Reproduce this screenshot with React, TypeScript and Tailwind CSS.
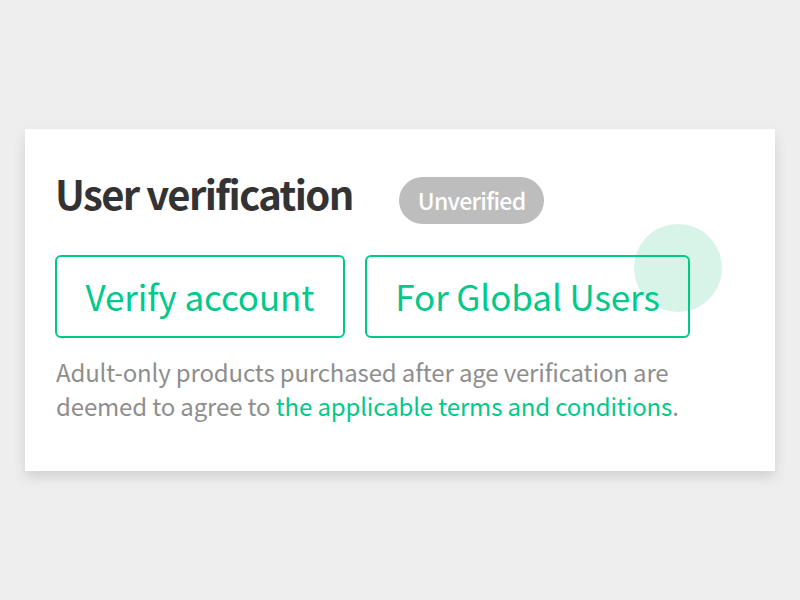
export default function App() {
  return (
    <div
      className="w-[800px] h-[600px] bg-[#eeeeee] pt-[129px] px-[25px]"
      style={{ fontFamily: '"Noto Sans CJK KR", "Source Sans Pro", "Noto Sans", sans-serif' }}
    >
      {/* Card */}
      <div className="relative bg-white h-[342px] shadow-[0_6px_12px_rgba(0,0,0,0.12)] px-[30px] pt-[40px]">
        <div className="flex items-start">
          <h2 className="text-[40px] leading-[48px] font-bold text-[#333333] tracking-[-1.6px]">
            User verification
          </h2>
          <span className="ml-[46px] mt-[8px] h-[47px] px-[19px] flex items-center rounded-full bg-[#bdbdbd] text-white text-[23px] leading-none font-medium tracking-[-0.7px]">
            Unverified
          </span>
        </div>

        <div className="relative flex gap-[20px] mt-[31px]">
          {/* decorative ripple */}
          <div className="absolute left-[579px] top-[-31px] w-[88px] h-[88px] rounded-full bg-[#d8f4e8]" />
          <button className="relative w-[290px] h-[83px] border-2 border-[#00c98a] rounded-[6px] text-[#00c98a] text-[35px] leading-none tracking-[-0.1px] flex items-center justify-center pb-[2px]">
            Verify account
          </button>
          <button className="relative w-[325px] h-[83px] border-2 border-[#00c98a] rounded-[6px] text-[#00c98a] text-[35px] leading-none tracking-[-0.1px] flex items-center justify-center pb-[2px]">
            For Global Users
          </button>
        </div>

        <p className="mt-[17px] ml-[1px] text-[24px] leading-[34px] text-[#8e8e8e] tracking-[-0.15px] w-[660px]">
          Adult-only products purchased after age verification are deemed to agree to{" "}
          <a href="#" className="text-[#00c98a]">
            the applicable terms and conditions
          </a>
          .
        </p>
      </div>
    </div>
  );
}
